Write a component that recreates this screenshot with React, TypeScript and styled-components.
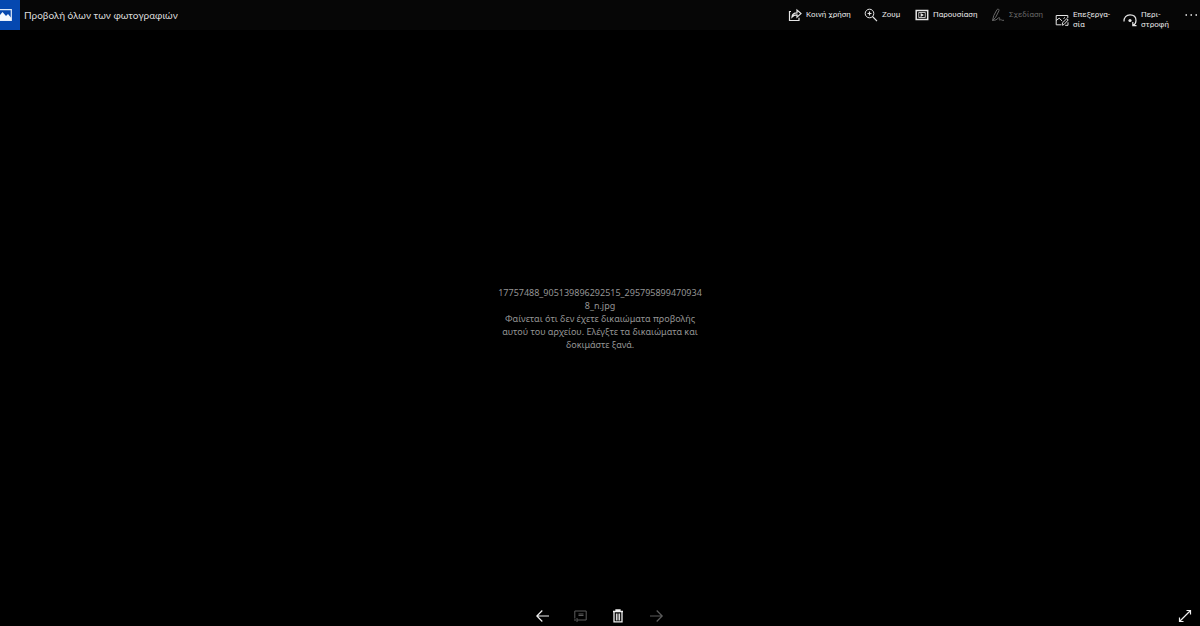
import React from "react";
import styled, { createGlobalStyle } from "styled-components";

const GlobalStyle = createGlobalStyle`
  * { box-sizing: border-box; }
  body {
    margin: 0;
    background: #000;
    color: #e6e6e6;
    font-family: "Noto Sans", "Open Sans", sans-serif;
  }
`;

const Viewer = styled.div`
  display: flex;
  flex-direction: column;
  min-height: 100vh;
`;

const Header = styled.header`
  display: flex;
  align-items: center;
  justify-content: space-between;
  height: 30px;
  background: #060606;
  font-family: Roboto, "Noto Sans", sans-serif;
`;

const AllPhotos = styled.a`
  display: flex;
  align-items: center;
  gap: 4px;
  color: #dcdcdc;
  font-family: Lato, "Noto Sans", sans-serif;
  font-size: 10px;
  line-height: 14px;
  text-decoration: none;
  white-space: nowrap;
`;

const LogoTile = styled.span`
  display: flex;
  align-items: center;
  width: 20px;
  height: 30px;
  background: #0548b0;
`;

const Toolbar = styled.div`
  display: flex;
  height: 30px;
`;

const ToolButton = styled.button<{ $width: number; $twoLine?: boolean }>`
  display: flex;
  align-items: center;
  gap: 4px;
  width: ${(p) => p.$width}px;
  height: 30px;
  padding: ${(p) => (p.$twoLine ? "9px 0 0" : "0 0 1px")};
  border: 0;
  background: none;
  color: #e6e6e6;
  font: inherit;
  font-size: 8px;
  line-height: 10px;
  text-align: left;
  white-space: nowrap;

  &:disabled { color: #666; }
`;

const IconButton = styled.button`
  display: flex;
  align-items: center;
  justify-content: center;
  width: 38px;
  height: 20px;
  padding: 0;
  border: 0;
  background: none;
  color: #f0f0f0;

  &:disabled { color: #5c5c5c; }
`;

const MoreButton = styled(IconButton)`
  width: 15px;
  height: 30px;
  justify-content: flex-start;
`;

const Icon = styled.svg`
  flex: none;
  display: block;
  fill: none;
  stroke: currentColor;
`;

const Stage = styled.main`
  flex: 1;
  display: flex;
  align-items: center;
  justify-content: center;
`;

const Message = styled.p`
  width: 204px;
  margin: 0;
  color: #949494;
  font-size: 9px;
  line-height: 13px;
  text-align: center;
  overflow-wrap: anywhere;
`;

const Footer = styled.footer`
  display: grid;
  grid-template-columns: 1fr auto 1fr;
  align-items: center;
  height: 20px;
`;

const Controls = styled.nav`
  display: flex;
  grid-column: 2;
`;

const FullScreenButton = styled(IconButton)`
  justify-self: end;
  width: 30px;
`;

export default function App() {
  return (
    <Viewer>
      <GlobalStyle />
      <Header>
        <AllPhotos href="#photos">
          <LogoTile>
            <Icon width="12" height="12" viewBox="0 0 12 12" aria-hidden="true">
              <path d="M0 .7h11.3v10.6H0" strokeWidth="1.2" stroke="#dce8f8" />
              <path d="M0 6 2.5 3l3.5 4 2-2 3.3 4v2.5H0z" fill="#f4f8ff" stroke="none" />
            </Icon>
          </LogoTile>
          Προβολή όλων των φωτογραφιών
        </AllPhotos>
        <Toolbar>
          <ToolButton $width={76}>
            <Icon width="14" height="14" viewBox="0 0 14 14" aria-hidden="true">
              <path d="M3 3.5H1.5v9H11V9.7M4 9c.2-2.8 2-4.1 5-4.1V2l4 3.6-4 3.6V6.9C6.8 6.9 5.3 7.4 4 9z" strokeWidth="1.2" />
            </Icon>
            Κοινή χρήση
          </ToolButton>
          <ToolButton $width={51}>
            <Icon width="14" height="14" viewBox="0 0 14 14" aria-hidden="true">
              <circle cx="5.5" cy="5.5" r="4.3" />
              <path d="M8.5 8.5 13 13.2M3.5 5.5h4M5.5 3.5v4" strokeWidth="1.2" />
            </Icon>
            Ζουμ
          </ToolButton>
          <ToolButton $width={76}>
            <Icon width="14" height="14" viewBox="0 0 14 14" aria-hidden="true">
              <rect x="1.2" y="2.5" width="11.5" height="9" strokeWidth="1.5" />
              <rect x="3.8" y="4.6" width="6.4" height="4.8" strokeWidth=".8" />
              <path d="M5.6 4.9v4.2L9 7z" fill="currentColor" stroke="none" />
            </Icon>
            Παρουσίαση
          </ToolButton>
          <ToolButton $width={64} disabled>
            <Icon width="14" height="14" viewBox="0 0 14 14" aria-hidden="true">
              <path d="M1.5 12.5 2.8 7.5 6 1.6c1-1 2.5-.2 2 1L4.7 9.3 1.5 12.5l3.5-.6 2.5-2c1.2-.8 1.5.2.9 1.3-.4 1.2.5 1 1.2.5.6-.4 1 .6 1.6.6H13" />
            </Icon>
            Σχεδίαση
          </ToolButton>
          <ToolButton $width={68} $twoLine>
            <Icon width="14" height="14" viewBox="0 0 14 14" aria-hidden="true">
              <path d="M6 11.8H1.2V2.5h11.6V5M1.2 7.5 4.2 5.2l3 2.8M8.5 5.5 10 4.5M7 12.2l.6-2.4L11.8 5.6l1.4 1.4L9 11.5z" />
              <path d="M10.2 12.3h2.8V9.3" />
            </Icon>
            <span>Επεξεργα-<br />σία</span>
          </ToolButton>
          <ToolButton $width={62} $twoLine>
            <Icon width="14" height="14" viewBox="0 0 14 14" aria-hidden="true">
              <path d="M1 8.5C.8 4.2 3.4 1.8 7 1.8s6 2.2 6 5.7c0 2.2-.8 3.8-2.8 5M9.8 9v3.7h3.7" strokeWidth="1.2" />
              <circle cx="7" cy="7.5" r="1.6" fill="currentColor" stroke="none" />
            </Icon>
            <span>Περι-<br />στροφή</span>
          </ToolButton>
          <MoreButton aria-label="Περισσότερα">
            <Icon width="13" height="4" viewBox="0 0 13 4" aria-hidden="true">
              <path d="M.5 2H2M5.5 2H7M10.5 2H12" strokeWidth="1.4" />
            </Icon>
          </MoreButton>
        </Toolbar>
      </Header>
      <Stage>
        <Message>
          17757488_905139896292515_2957958994709348_n.jpg
          <br />
          Φαίνεται ότι δεν έχετε δικαιώματα προβολής αυτού του αρχείου. Ελέγξτε τα δικαιώματα και δοκιμάστε ξανά.
        </Message>
      </Stage>
      <Footer>
        <Controls aria-label="Πλοήγηση">
          <IconButton aria-label="Προηγούμενο">
            <Icon width="14" height="14" viewBox="0 0 14 14" aria-hidden="true">
              <path d="M13 7H.8M6.3 1.5.8 7l5.5 5.5" strokeWidth="1.2" />
            </Icon>
          </IconButton>
          <IconButton aria-label="Προβολή παρουσίασης" disabled>
            <Icon width="14" height="14" viewBox="0 0 14 14" aria-hidden="true">
              <path d="M.8 9.5V2h11.4v9H5M0 11h4M2.5 9l2 2-2 2" />
              <path d="M4.5 5h5M4.5 6.5h5" />
            </Icon>
          </IconButton>
          <IconButton aria-label="Διαγραφή">
            <Icon width="14" height="14" viewBox="0 0 14 14" aria-hidden="true">
              <path d="M1 2.5h10M4 2.5V1h4v1.5M2 2.5v10.4h8V2.5" strokeWidth="1.3" />
              <path d="M4.4 4.5v7M6 4.5v7M7.6 4.5v7" strokeWidth="1" />
            </Icon>
          </IconButton>
          <IconButton aria-label="Επόμενο" disabled>
            <Icon width="14" height="14" viewBox="0 0 14 14" aria-hidden="true">
              <path d="M0 7h12.2M6.7 1.5 12.2 7l-5.5 5.5" strokeWidth="1.2" />
            </Icon>
          </IconButton>
        </Controls>
        <FullScreenButton aria-label="Πλήρης οθόνη">
          <Icon width="14" height="14" viewBox="0 0 14 14" aria-hidden="true">
            <path d="M1.5 12.5l11-11M8.5 1.5h4v4M1.5 8.5v4h4" strokeWidth="1.2" />
          </Icon>
        </FullScreenButton>
      </Footer>
    </Viewer>
  );
}
